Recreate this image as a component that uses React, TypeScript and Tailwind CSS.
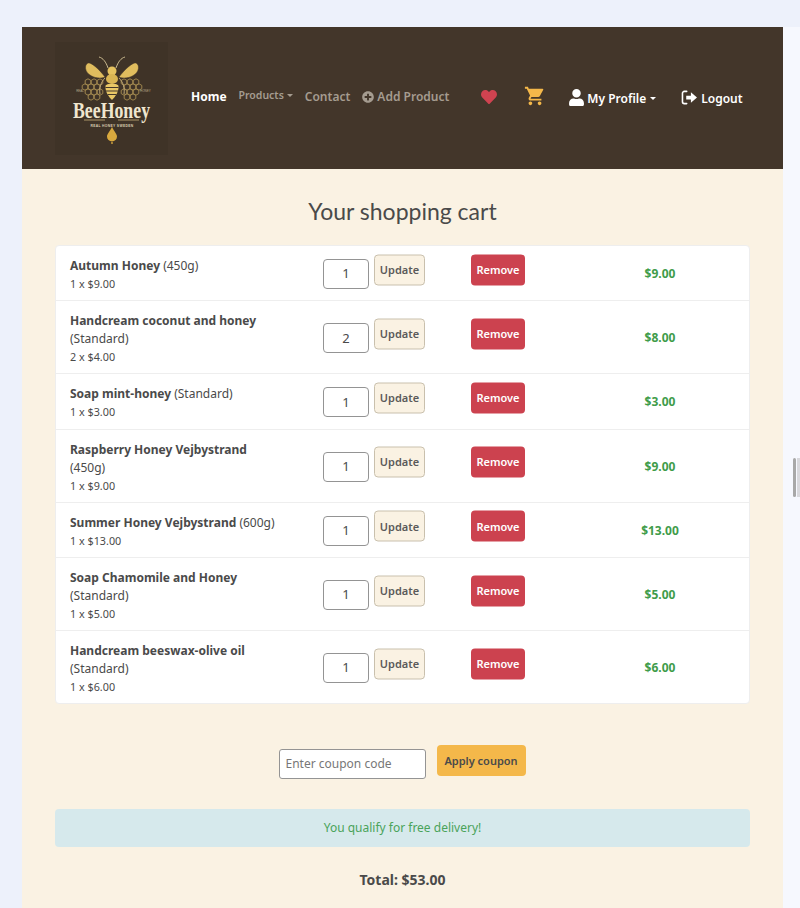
import React from "react";
import { FaHeart, FaUser, FaPlusCircle } from "react-icons/fa";
import { MdShoppingCart } from "react-icons/md";

const items = [
  { name: "Autumn Honey", variant: "(450g)", unit: "1 x $9.00", qty: 1, total: "$9.00" },
  { name: "Handcream coconut and honey", variant: "(Standard)", unit: "2 x $4.00", qty: 2, total: "$8.00" },
  { name: "Soap mint-honey", variant: "(Standard)", unit: "1 x $3.00", qty: 1, total: "$3.00" },
  { name: "Raspberry Honey Vejbystrand", variant: "(450g)", unit: "1 x $9.00", qty: 1, total: "$9.00" },
  { name: "Summer Honey Vejbystrand", variant: "(600g)", unit: "1 x $13.00", qty: 1, total: "$13.00" },
  { name: "Soap Chamomile and Honey", variant: "(Standard)", unit: "1 x $5.00", qty: 1, total: "$5.00" },
  { name: "Handcream beeswax-olive oil", variant: "(Standard)", unit: "1 x $6.00", qty: 1, total: "$6.00" },
];

function Logo() {
  const cells: React.ReactNode[] = [];
  const hex = (cx: number, cy: number, k: string) => (
    <polygon
      key={k}
      points={`${cx},${cy - 3.2} ${cx + 2.8},${cy - 1.6} ${cx + 2.8},${cy + 1.6} ${cx},${cy + 3.2} ${cx - 2.8},${cy + 1.6} ${cx - 2.8},${cy - 1.6}`}
      fill="none"
      stroke="#a98f52"
      strokeWidth="0.9"
    />
  );
  [[33, 40], [39, 40], [45, 40], [30, 45], [36, 45], [42, 45], [33, 50], [39, 50], [45, 50], [36, 55], [42, 55]].forEach(([x, y], i) => {
    cells.push(hex(x, y, `l${i}`));
    cells.push(hex(114 - x, y, `r${i}`));
  });
  return (
    <svg width="113" height="113" viewBox="0 0 113 113" className="block shrink-0">
      <rect width="113" height="113" fill="#3f3327" />
      {cells}
      <path d="M50 35 C44 27 36 20 33 21 C29 23 30 30 35 33 C39 36 46 37 50 35 Z" fill="#e0bd5e" stroke="#43362a" strokeWidth="0.5" />
      <path d="M64 35 C70 27 78 20 81 21 C85 23 84 30 79 33 C75 36 68 37 64 35 Z" fill="#e0bd5e" stroke="#43362a" strokeWidth="0.5" />
      <path d="M53 26 C51 20 48 16 44 15 M61 26 C63 20 66 16 70 15" stroke="#d8c79a" strokeWidth="0.9" fill="none" />
      <path d="M50 36 C46 40 44 46 45 52 M64 36 C68 40 70 46 69 52" stroke="#cdb581" strokeWidth="0.9" fill="none" />
      <circle cx="57" cy="29" r="4.5" fill="#e5c25f" />
      <ellipse cx="57" cy="37" rx="6" ry="5" fill="#d9b553" />
      <path d="M50.5 44 C50.5 41 63.5 41 63.5 44 C64 50 60 55 57 58 C54 55 50 50 50.5 44 Z" fill="#e8c766" />
      <path d="M50.5 45.5 H63.5 M51 49 H63 M52.5 52.5 H61.5" stroke="#43362a" strokeWidth="1.1" />
      <text x="29" y="49.5" textAnchor="end" fontFamily="'Liberation Sans', sans-serif" fontSize="3" fill="#b7a988">REAL</text>
      <text x="85" y="49.5" fontFamily="'Liberation Sans', sans-serif" fontSize="3" fill="#b7a988">HONEY</text>
      <text transform="translate(56.5 76) scale(1 1.55)" textAnchor="middle" fontFamily="'Liberation Serif', serif" fontWeight="700" fontSize="15" fill="#f0e6cf" textLength="77" lengthAdjust="spacingAndGlyphs">BeeHoney</text>
      <path d="M29 78 H50 M63 78 H84" stroke="#c9b07a" strokeWidth="0.8" />
      <text x="57" y="84.5" textAnchor="middle" fontFamily="'Liberation Sans', sans-serif" fontWeight="700" fontSize="3.4" fill="#d9ccb0" letterSpacing="0.3">REAL HONEY   SWEDEN</text>
      <path d="M57 85 C59.5 90 62 92 62 94.5 A5 5 0 0 1 52 94.5 C52 92 54.5 90 57 85 Z" fill="#d9a93e" />
      <circle cx="57" cy="101" r="0.9" fill="#d9a93e" />
    </svg>
  );
}

function CartRow({ item, last }: { item: (typeof items)[number]; last: boolean }) {
  return (
    <div className={`flex items-center pl-[14px] pr-[5px] py-[9.1px] ${last ? "" : "border-b border-[#eeeeee]"}`}>
      <div className="w-[253px] shrink-0 pr-[43px] leading-[18px] translate-y-[1.5px]">
        <div className="text-[12px] text-[#4a4a4a]">
          <span className="font-bold">{item.name}</span> {item.variant}
        </div>
        <div className="text-[10.8px] text-[#4a4a4a]">{item.unit}</div>
      </div>
      <div className="w-[148px] shrink-0 flex items-center">
        <div className="w-[46px] h-[30px] translate-y-px border-[1.5px] border-[#949494] rounded-[4px] bg-white flex items-center justify-center text-[13px] text-[#4a4a4a]">
          {item.qty}
        </div>
        <button className="ml-[5px] -translate-y-[3.5px] w-[51px] h-[31px] rounded-[4px] border border-[#c9c0ad] bg-[#faf2e3] text-[11px] font-semibold text-[#5a5a5a]">
          Update
        </button>
      </div>
      <div className="w-[104px] shrink-0 flex items-center">
        <button className="-translate-y-[3.5px] w-[54px] h-[31px] rounded-[4px] bg-[#cc424f] text-[11px] font-semibold text-white">
          Remove
        </button>
      </div>
      <div className="w-[170px] shrink-0 translate-y-px text-center text-[12px] font-bold text-[#3f9c4a]">{item.total}</div>
    </div>
  );
}

export default function App() {
  return (
    <div className="relative h-[908px] overflow-hidden bg-[#f6f8fe] pt-[27px] pl-[22px] [font-family:'Noto_Sans',sans-serif]">
      <div className="absolute left-0 top-0 right-0 h-[27px] bg-[#edf1fb]" />
      <div className="absolute left-0 top-0 bottom-0 w-[22px] bg-[#edf1fb]" />
      <div className="absolute left-[793px] top-[458px] w-[3px] h-[39px] rounded-full bg-[#a8a8a8]" />
      <div className="absolute left-[797px] top-[458px] w-[3px] h-[39px] bg-[#d8d8dc]" />

      <div className="relative w-[761px] bg-[#faf2e3]">
        <header className="h-[142px] bg-[#43362a] flex items-center pl-[33px]">
          <Logo />
          <nav className="flex items-center">
            <span className="ml-[23px] -mt-[2px] text-[12px] font-bold text-white">Home</span>
            <span className="ml-[12px] text-[10.5px] font-semibold text-[#a59c90] -mt-[5px] flex items-center">
              Products
              <span className="ml-[3px] border-x-[3px] border-x-transparent border-t-[3px] border-t-[#a59c90]" />
            </span>
            <span className="ml-[12px] -mt-[2px] text-[12px] font-semibold text-[#a59c90]">Contact</span>
            <span className="ml-[12px] text-[12px] font-semibold text-[#a59c90] flex items-center -mt-[3px]">
              <FaPlusCircle className="w-[12px] h-[12px] mr-[3px]" />
              Add Product
            </span>
            <FaHeart className="ml-[31px] -mt-[2px] w-[18px] h-[16px] text-[#cf4350]" />
            <MdShoppingCart className="ml-[26px] w-[22px] h-[22px] -mt-[5px] text-[#f4b84a]" />
            <span className="ml-[23px] mt-[1px] text-[12px] font-semibold text-white flex items-center">
              <FaUser className="w-[15px] h-[17px] mr-[3px] -mt-[3px]" />
              My Profile
              <span className="ml-[4px] border-x-[3px] border-x-transparent border-t-[3px] border-t-white" />
            </span>
            <span className="ml-[25px] mt-[1px] text-[12px] font-semibold text-white flex items-center">
              <svg viewBox="0 0 18 16" className="w-[17px] h-[15px] mr-[3px] -mt-[2px]">
                <path d="M6 1.5H3.5A2 2 0 0 0 1.5 3.5v9a2 2 0 0 0 2 2H6" fill="none" stroke="white" strokeWidth="1.7" strokeLinecap="round" />
                <path d="M5.5 6H10.5V2.5L17 8l-6.5 5.5V10H5.5Z" fill="white" />
              </svg>
              Logout
            </span>
          </nav>
        </header>

        <main className="px-[33px] h-[739px]">
          <h1 className="pt-[27px] text-center text-[23px] leading-[30px] text-[#4a4a4a] [font-family:'Lato',sans-serif]">
            Your shopping cart
          </h1>
          <div className="mt-[19px] w-[695px] rounded-[4px] bg-white border border-[#eeeeee] overflow-hidden">
            {items.map((it, i) => (
              <CartRow key={it.name} item={it} last={i === items.length - 1} />
            ))}
          </div>
          <div className="mt-[41px] flex justify-center items-start pr-[1px]">
            <div className="w-[147px] h-[30px] mt-[4px] border-[1.5px] border-[#949494] rounded-[3px] bg-white px-[6px] flex items-center text-[12px] text-[#777777]">
              Enter coupon code
            </div>
            <button className="ml-[11px] w-[89px] h-[31px] rounded-[4px] bg-[#f4b84a] text-[11px] font-semibold text-[#4a4a4a]">
              Apply coupon
            </button>
          </div>
          <div className="mt-[30px] h-[38px] rounded-[4px] bg-[#d6e9ec] flex items-center justify-center text-[12px] text-[#4aa35a]">
            You qualify for free delivery!
          </div>
          <div className="mt-[23px] text-center text-[14px] leading-[20px] font-bold text-[#4a4a4a]">Total: $53.00</div>
        </main>
      </div>
    </div>
  );
}
